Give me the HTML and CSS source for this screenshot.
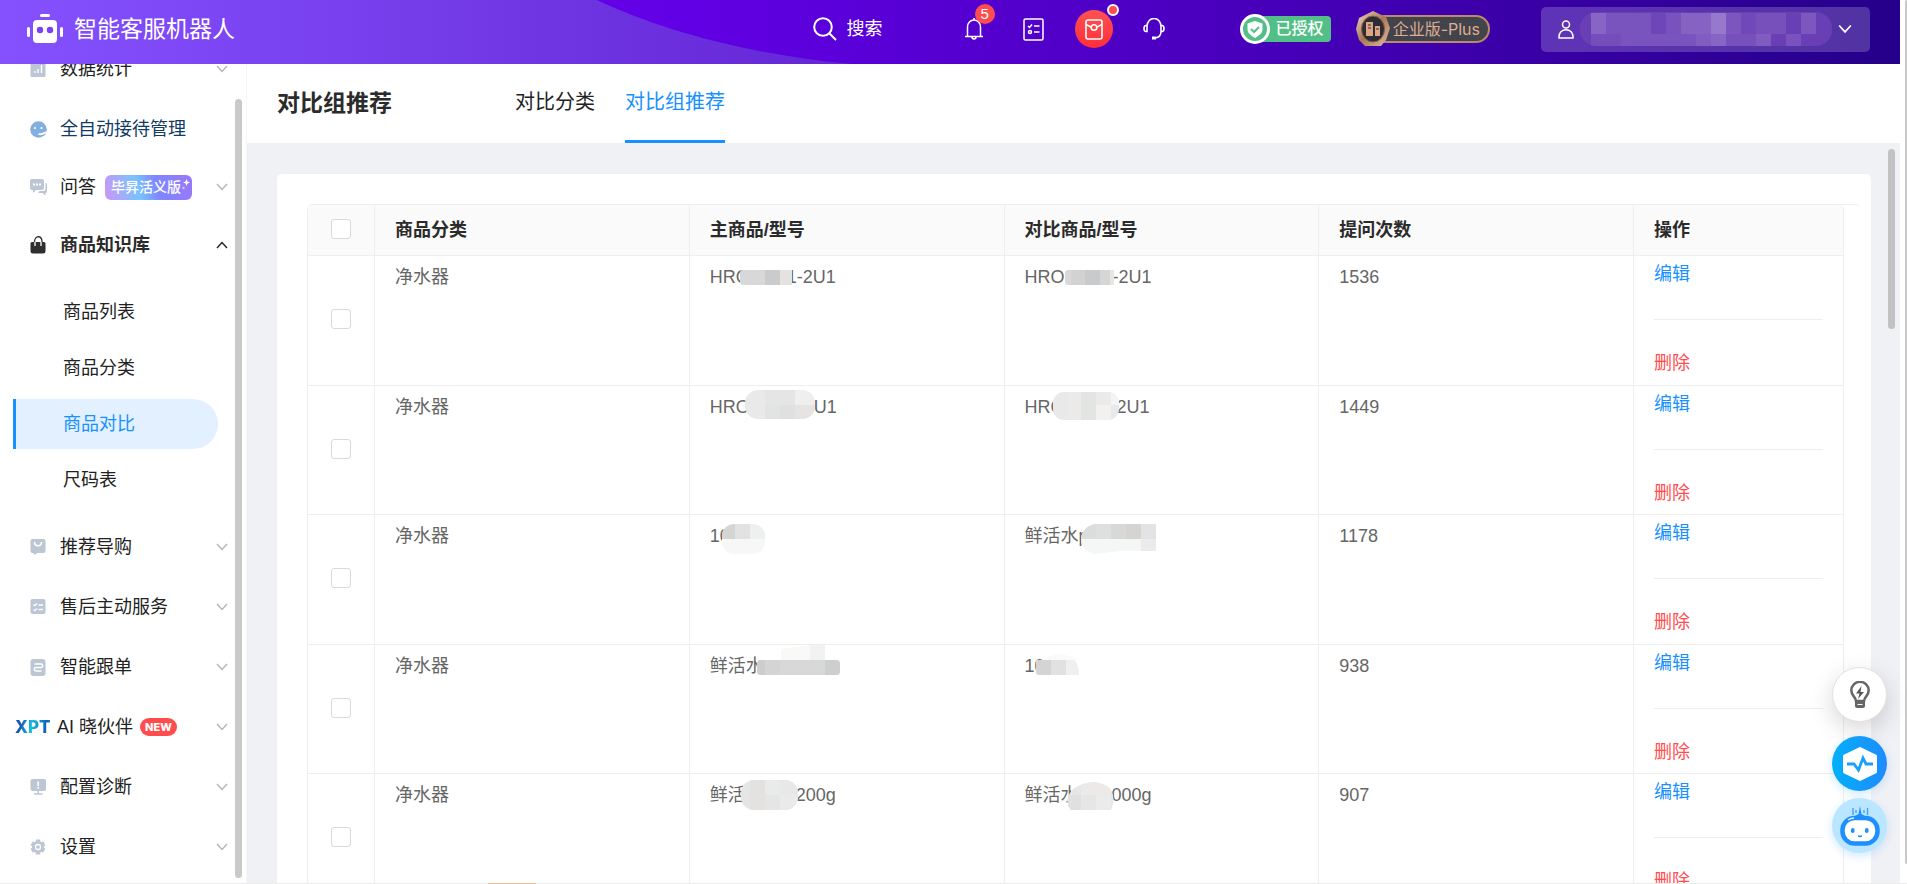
FILE: index.html
```html
<!DOCTYPE html>
<html lang="zh-CN">
<head>
<meta charset="utf-8">
<title>智能客服机器人</title>
<link rel="stylesheet" href="styles.css">
</head>
<body>
<svg class="defs" width="0" height="0" aria-hidden="true">
  <defs>
    <linearGradient id="sweep" x1="0" x2="1" y1="0" y2="0"><stop offset="0" stop-color="#8551ff"/><stop offset="1" stop-color="#6426d4"/></linearGradient>
    <linearGradient id="bronze" x1="0" x2="1" y1="0" y2="1"><stop offset="0" stop-color="#f3d9c4"/><stop offset=".5" stop-color="#a97757"/><stop offset="1" stop-color="#e0bda2"/></linearGradient>
    <symbol id="chev" viewBox="0 0 12 8"><path d="M1 1l5 5.500 5-5.500" fill="none" stroke="currentColor" stroke-width="1.400"/></symbol>
  </defs>
</svg>
<div class="app">
  <header class="topbar">
    <svg class="sweep" width="860" height="64" viewBox="0 0 860 64" aria-hidden="true"><path d="M0 0H597C660 30 750 55 852 64H0z" fill="url(#sweep)"/></svg>
    <a class="brand" href="#">
      <svg width="36" height="30" viewBox="0 0 36 30" aria-hidden="true"><g fill="#fff"><rect x="13" y="0" width="10" height="3" rx="1.500"/><rect x="6" y="6" width="24" height="23" rx="4"/><rect x="0" y="13" width="3" height="10" rx="1.500"/><rect x="33" y="13" width="3" height="10" rx="1.500"/></g><g fill="#7a42f5"><circle cx="13" cy="16" r="3.200"/><circle cx="23" cy="16" r="3.200"/></g></svg>
      <span>智能客服机器人</span>
    </a>
    <div class="tools">
      <button class="tool search" type="button">
        <svg width="24" height="24" viewBox="0 0 24 24" fill="none" stroke="#fff" stroke-width="2"><circle cx="10" cy="10" r="8.800"/><path d="M16.500 16.500L23 23"/></svg>
        <span>搜索</span>
      </button>
      <button class="tool bell" type="button" aria-label="通知">
        <svg width="20" height="22" viewBox="0 0 20 22" fill="none" stroke="#fff" stroke-width="1.500"><path d="M1 18.500h18M3.500 18.500V9a6.500 7 0 0 1 13 0v9.500M10 2V0M8 19c0 2.500 4 2.500 4 0"/></svg>
        <span class="count">5</span>
      </button>
      <button class="tool" type="button" aria-label="任务">
        <svg width="21" height="23" viewBox="0 0 21 23" fill="none" stroke="#fff" stroke-width="1.500"><rect x="1" y="1" width="19" height="21" rx="1.500"/><path d="M5 8l1.500 1.500L9 6.500M11 8h5.500M11 14h5.500"/><circle cx="7" cy="14" r="1.500"/></svg>
      </button>
      <button class="tool gift" type="button" aria-label="红包">
        <svg width="18" height="21" viewBox="0 0 18 21" fill="none" stroke="#fff" stroke-width="1.600"><rect x="1" y="1" width="16" height="19" rx="2"/><path d="M1 5.500l5 2.500M17 5.500l-5 2.500"/><circle cx="9" cy="8.500" r="2.800"/></svg>
        <span class="dot"></span>
      </button>
      <button class="tool" type="button" aria-label="客服">
        <svg width="22" height="22" viewBox="0 0 22 22" fill="none" stroke="#fff" stroke-width="1.600"><path d="M4 8a7 7.500 0 0 1 14 0M4 7.500v6H3c-1.500 0-2-1-2-3s.500-3 2-3zM18 7.500v6h1c1.500 0 2-1 2-3s-.500-3-2-3zM18 13.500c0 4-2 6-6 6.500"/><path d="M9 20h4" stroke-width="3"/></svg>
      </button>
      <span class="auth">
        <svg width="30" height="30" viewBox="0 0 30 30" aria-hidden="true"><circle cx="15" cy="15" r="13.500" fill="#52bf86" stroke="#fff" stroke-width="3"/><path d="M15 7l7.500 2.500V15c0 4-3 6.500-7.500 9-4.500-2.500-7.500-5-7.500-9V9.500z" fill="#fff"/><path d="M11 15l3 3 5-5" fill="none" stroke="#52bf86" stroke-width="2"/></svg>
        <span>已授权</span>
      </span>
      <span class="edition">
        <svg width="36" height="36" viewBox="0 0 36 36" aria-hidden="true"><path d="M18 0l13 6 4 11-4 12-5 6H10l-6-6-3-11L4 7z" fill="url(#bronze)"/><ellipse cx="18" cy="18" rx="11.500" ry="13" fill="#2c2c34" stroke="#8a6048"/><path d="M11 11h7v14h-7zM20 15h5v10h-5z" fill="#dba584"/><path d="M13 14h3M13 17h3M21 18h3" stroke="#2c2c34"/></svg>
        <span>企业版-Plus</span>
      </span>
      <button class="account" type="button" aria-label="账户">
        <svg width="16" height="19" viewBox="0 0 16 19" fill="none" stroke="#fff" stroke-width="1.500"><circle cx="8" cy="4.500" r="3.500"/><path d="M1 18c-1-11 15-11 14 0z"/></svg>
        <svg width="252" height="38" viewBox="0 0 252 38" aria-hidden="true"><defs><clipPath id="acct"><rect width="252" height="34" y="2" rx="16"/></clipPath></defs><g clip-path="url(#acct)"><rect width="252" height="38" fill="#6a3fb6"/><g fill="#fff"><rect x="11" y="3" width="15" height="21" opacity=".2"/><rect x="26" y="3" width="45" height="21" opacity=".11"/><rect x="71" y="3" width="15" height="21" opacity=".04"/><rect x="86" y="3" width="15" height="21" opacity=".1"/><rect x="101" y="3" width="30" height="21" opacity=".19"/><rect x="131" y="3" width="15" height="21" opacity=".3"/><rect x="146" y="3" width="15" height="21" opacity=".12"/><rect x="161" y="3" width="15" height="21" opacity=".05"/><rect x="176" y="3" width="30" height="21" opacity=".09"/><rect x="221" y="3" width="15" height="21" opacity=".13"/><rect x="11" y="24" width="30" height="18" opacity=".08"/><rect x="41" y="24" width="75" height="18" opacity=".11"/><rect x="116" y="24" width="15" height="18" opacity=".16"/><rect x="131" y="24" width="15" height="18" opacity=".2"/><rect x="146" y="24" width="30" height="18" opacity=".09"/><rect x="176" y="24" width="15" height="18" opacity=".15"/><rect x="206" y="24" width="15" height="18" opacity=".1"/></g></g></svg>
        <svg class="chevron" width="14" height="10"><use href="#chev"/></svg>
      </button>
    </div>
  </header>

  <nav class="sidebar">
    <ul class="menu">
      <li><a class="item" href="#"><svg width="16" height="16" viewBox="0 0 16 16"><rect width="15" height="16" rx="1.500" fill="#bcc6d4"/><path d="M4.500 12v-2M7.500 12V8M11 12V4" stroke="#fff" stroke-width="1.400"/></svg><span>数据统计</span><svg class="arrow" width="12" height="8"><use href="#chev"/></svg></a></li>
      <li><a class="item navy" href="#"><svg width="17" height="17" viewBox="0 0 17 17"><circle cx="8.500" cy="8.500" r="8.300" fill="#82afe0"/><circle cx="5" cy="7" r="1.100" fill="#fff"/><circle cx="11.500" cy="7" r="1.100" fill="#fff"/><path d="M8.500 13c3 1 5-.500 7.500-2" stroke="#fff" stroke-width="1.800" fill="none"/></svg><span>全自动接待管理</span></a></li>
      <li><a class="item short" href="#"><svg width="17" height="17" viewBox="0 0 17 17"><path d="M2 0h10a2 2 0 0 1 2 2v7a2 2 0 0 1-2 2H6l-3 3v-3H2a2 2 0 0 1-2-2V2a2 2 0 0 1 2-2z" fill="#bcc6d4"/><path d="M15.500 4c1 0 1.500.500 1.500 1.500V12c0 1-.500 2-1.500 2v2.500L12.500 14H8l1.500-2h4c1 0 2-1 2-2z" fill="#bcc6d4"/><path d="M3 5.500h8" stroke="#fff" stroke-width="2" stroke-dasharray="2 1"/></svg><span>问答</span><span class="promo">毕昇活义版<svg width="8" height="12" viewBox="0 0 8 12"><path d="M4.500 0l1 2.500L8 3.500l-2.500 1-1 2.500-1-2.500L1 3.500l2.500-1z" fill="#fff"/><circle cx="1.500" cy="9" r="1.200" fill="#d9ccff"/></svg></span><svg class="arrow" width="12" height="8"><use href="#chev"/></svg></a></li>
      <li>
        <a class="item open" href="#"><svg width="16" height="18" viewBox="0 0 16 18"><path d="M1.500 6h12a1.500 1.500 0 0 1 1.500 1.500V15a2.500 2.500 0 0 1-2.500 2.500h-10A2.500 2.500 0 0 1 0 15V7.500A1.500 1.500 0 0 1 1.500 6z" fill="#2f2f2f"/><path d="M4 6c0-7 7.500-7 7.500 0" stroke="#2f2f2f" stroke-width="1.300" fill="none"/><path d="M4.500 6v4M10.500 6v4" stroke="#fff" stroke-width="1.300"/></svg><span>商品知识库</span><svg class="arrow" width="12" height="8"><use href="#chev"/></svg></a>
        <ul class="submenu">
          <li><a class="sub" href="#">商品列表</a></li>
          <li><a class="sub" href="#">商品分类</a></li>
          <li><a class="sub current" href="#">商品对比</a></li>
          <li><a class="sub" href="#">尺码表</a></li>
        </ul>
      </li>
      <li><a class="item" href="#"><svg width="16" height="16" viewBox="0 0 16 16"><path d="M2 0h11a2 2 0 0 1 2 2v10a2 2 0 0 1-2 2H7l-3 2-1-2H2a2 2 0 0 1-2-2V2a2 2 0 0 1 2-2z" fill="#bcc6d4"/><path d="M4 3c0 5 7 5 7 0" fill="none" stroke="#fff" stroke-width="1.500"/></svg><span>推荐导购</span><svg class="arrow" width="12" height="8"><use href="#chev"/></svg></a></li>
      <li><a class="item" href="#"><svg width="16" height="16" viewBox="0 0 16 16"><rect width="15" height="15" rx="2" fill="#bcc6d4"/><path d="M3 5.500l1.300 1.200L6.500 4.500M3 10.500l1.300 1.200 2.200-2.200M8 6h4.500M8 10.500h4.500" stroke="#fff" stroke-width="1.300" fill="none"/></svg><span>售后主动服务</span><svg class="arrow" width="12" height="8"><use href="#chev"/></svg></a></li>
      <li><a class="item" href="#"><svg width="16" height="17" viewBox="0 0 16 17"><rect width="15" height="17" rx="3" fill="#bcc6d4"/><path d="M4 5h6.500a1.500 1.500 0 0 1 0 3.500H5.500a1.500 1.500 0 0 0 0 3.500H11" stroke="#fff" stroke-width="1.400" fill="none"/></svg><span>智能跟单</span><svg class="arrow" width="12" height="8"><use href="#chev"/></svg></a></li>
      <li><a class="item ai" href="#"><span class="xpt">XPT</span><span>AI 晓伙伴</span><span class="new">NEW</span><svg class="arrow" width="12" height="8"><use href="#chev"/></svg></a></li>
      <li><a class="item" href="#"><svg width="16" height="16" viewBox="0 0 16 16"><rect width="15.500" height="12" rx="2" fill="#bcc6d4"/><path d="M3.500 15h8.500M7.700 12v3" stroke="#bcc6d4" stroke-width="1.500"/><path d="M7.700 2.500v4.500M7.700 8v1.700" stroke="#fff" stroke-width="1.600"/></svg><span>配置诊断</span><svg class="arrow" width="12" height="8"><use href="#chev"/></svg></a></li>
      <li><a class="item" href="#"><svg width="16" height="16" viewBox="0 0 16 16"><circle cx="7.500" cy="8" r="6" fill="#bcc6d4"/><path d="M7.500 .500v15M1.200 4.300l12.600 7.400M1.200 11.700l12.600-7.400" stroke="#bcc6d4" stroke-width="4.500"/><circle cx="7.500" cy="8" r="2.500" fill="#bcc6d4" stroke="#fff" stroke-width="1.300"/></svg><span>设置</span><svg class="arrow" width="12" height="8"><use href="#chev"/></svg></a></li>
    </ul>
    <span class="thumb"></span>
  </nav>

  <main class="page">
    <div class="pagehead">
      <h1>对比组推荐</h1>
      <div class="tabs">
        <a class="tab" href="#">对比分类</a>
        <a class="tab active" href="#">对比组推荐</a>
      </div>
    </div>
    <div class="content">
      <section class="card">
        <div class="tablewrap">
          <table>
            <colgroup><col class="c-check"><col><col><col><col><col class="c-ops"></colgroup>
            <thead><tr><th class="pick"><input type="checkbox" aria-label="全选"></th><th>商品分类</th><th>主商品/型号</th><th>对比商品/型号</th><th>提问次数</th><th>操作</th></tr></thead>
            <tbody>
              <tr><td class="pick"><input type="checkbox" aria-label="选择第1行"></td><td>净水器</td>
                <td><div class="model"><span>HRO</span><svg class="mosaic" width="49" height="30"><rect x="-2" y="8" width="27" height="15" rx="3" fill="#d8d8d8"/><rect x="7" y="8" width="18" height="15" fill="#d8d8d8"/><rect x="23" y="8" width="15" height="15" fill="#cacbcd"/><rect x="38" y="8" width="12" height="15" fill="#e4e3df"/></svg><span>1-2U1</span></div></td>
                <td><div class="model"><span>HRO</span><svg class="mosaic" width="60" height="30"><rect x="8" y="8" width="20" height="15" rx="3" fill="#d9d9d9"/><rect x="14" y="8" width="14" height="15" fill="#d2d2d3"/><rect x="28" y="8" width="15" height="15" fill="#c9cacc"/><rect x="43" y="8" width="10" height="15" fill="#d6d6d6"/><rect x="53" y="8" width="4" height="15" fill="#e6e6e4"/></svg><span>-2U1</span></div></td>
                <td>1536</td><td class="ops"><a href="#">编辑</a><hr><a class="danger" href="#">删除</a></td></tr>
              <tr><td class="pick"><input type="checkbox" aria-label="选择第2行"></td><td>净水器</td>
                <td><div class="model"><span>HRO</span><svg class="mosaic" width="76" height="30"><clipPath id="m21"><rect x="3" y="-2" width="70" height="29" rx="13"/></clipPath><g clip-path="url(#m21)"><rect x="3" y="-2" width="72" height="30" fill="#e9e9e9"/><rect x="23" y="-2" width="30" height="15" fill="#e4e5e4"/><rect x="53" y="-2" width="22" height="15" fill="#efefef"/><rect x="23" y="13" width="15" height="15" fill="#e2e4e3"/><rect x="38" y="13" width="15" height="15" fill="#e0e0e0"/><rect x="53" y="13" width="22" height="15" fill="#e5e4e2"/></g></svg><span>U1</span></div></td>
                <td><div class="model"><span>HRO</span><svg class="mosaic" width="64" height="30"><clipPath id="m22"><rect x="-4" y="0" width="66" height="28" rx="11"/></clipPath><g clip-path="url(#m22)"><rect x="-4" width="68" height="28" fill="#e9e9e9"/><rect x="9" width="15" height="28" fill="#ebeae8"/><rect x="24" width="15" height="28" fill="#e3e4e4"/><rect x="39" width="15" height="13" fill="#ebeae8"/><rect x="39" y="13" width="15" height="15" fill="#f2f1ef"/><rect x="54" width="15" height="13" fill="#f2f5f8"/></g></svg><span>2U1</span></div></td>
                <td>1449</td><td class="ops"><a href="#">编辑</a><hr><a class="danger" href="#">删除</a></td></tr>
              <tr><td class="pick"><input type="checkbox" aria-label="选择第3行"></td><td>净水器</td>
                <td><div class="model"><span>10</span><svg class="mosaic" width="43" height="30"><clipPath id="m31"><rect x="0" y="3" width="43" height="30" rx="12"/></clipPath><g clip-path="url(#m31)"><rect y="3" width="43" height="30" fill="#f7f7f7"/><rect y="3" width="13" height="15" fill="#d5d5d3"/><rect x="13" y="3" width="15" height="15" fill="#e2e2e2"/><rect x="28" y="3" width="15" height="15" fill="#edf0ef"/></g></svg></div></td>
                <td><div class="model"><span>鲜活水p</span><svg class="mosaic" width="75" height="30"><clipPath id="m32"><path d="M14 3H75V30H40L14 33Q0 30 0 18 2 5 14 3z"/></clipPath><g clip-path="url(#m32)"><rect y="3" width="75" height="30" fill="#f5f7f6"/><rect y="3" width="15" height="15" fill="#dcdcdc"/><rect x="15" y="3" width="15" height="15" fill="#dee0df"/><rect x="30" y="3" width="15" height="15" fill="#d8d8d7"/><rect x="45" y="3" width="15" height="15" fill="#d5d4d2"/><rect x="60" y="3" width="15" height="15" fill="#e2e3e5"/><rect x="60" y="18" width="15" height="15" fill="#ebebeb"/></g></svg></div></td>
                <td>1178</td><td class="ops"><a href="#">编辑</a><hr><a class="danger" href="#">删除</a></td></tr>
              <tr><td class="pick"><input type="checkbox" aria-label="选择第4行"></td><td>净水器</td>
                <td><div class="model"><span>鲜活水</span><svg class="mosaic" width="84" height="30"><path d="M25 -2L55 -6V9H25z" fill="#f9f9f8"/><rect x="54" y="-6" width="15" height="15" fill="#f1f3f2"/><clipPath id="m41"><rect x="1" y="9" width="83" height="15" rx="4"/></clipPath><g clip-path="url(#m41)"><rect y="9" width="84" height="15" fill="#d8d8d9"/><rect y="9" width="9" height="15" fill="#cecccd"/><rect x="9" y="9" width="15" height="15" fill="#d3d4d3"/><rect x="69" y="9" width="15" height="15" fill="#cdcecf"/></g></svg></div></td>
                <td><div class="model"><span>10</span><svg class="mosaic" width="44" height="30"><path d="M5 9Q22 -2 42 9z" fill="#fafafa"/><clipPath id="m42"><path d="M-1 9H37Q42 12 42 24H2Q-1 24 -1 21z"/></clipPath><g clip-path="url(#m42)"><rect x="-1" y="9" width="15" height="15" fill="#d4d4d4"/><rect x="14" y="9" width="15" height="15" fill="#e1e1e1"/><rect x="29" y="9" width="14" height="15" fill="#efefef"/></g></svg></div></td>
                <td>938</td><td class="ops"><a href="#">编辑</a><hr><a class="danger" href="#">删除</a></td></tr>
              <tr><td class="pick"><input type="checkbox" aria-label="选择第5行"></td><td>净水器</td>
                <td><div class="model"><span>鲜活</span><svg class="mosaic" width="62" height="30"><clipPath id="m51"><rect x="3" y="0" width="57" height="30" rx="13"/></clipPath><g clip-path="url(#m51)"><rect width="62" height="30" fill="#e5e5e5"/><rect x="12" width="15" height="30" fill="#e3e2e0"/><rect x="27" width="15" height="15" fill="#e9ebea"/><rect x="42" width="20" height="15" fill="#e8e8e8"/><rect x="42" y="15" width="20" height="15" fill="#e9eaec"/></g></svg><span>200g</span></div></td>
                <td><div class="model"><span>鲜活水</span><svg class="mosaic" width="45" height="30"><clipPath id="m52"><path d="M0 30Q-8 20 2 9 20-3 36 6 44 12 42 24L40 30z"/></clipPath><g clip-path="url(#m52)"><rect x="-4" width="50" height="30" fill="#e6e6e6"/><rect x="10" width="30" height="15" fill="#ebeae8"/><rect x="25" y="15" width="15" height="15" fill="#e9eceb"/><rect x="-4" y="15" width="14" height="15" fill="#e0e0e0"/></g></svg><span>000g</span></div></td>
                <td>907</td><td class="ops"><a href="#">编辑</a><hr><a class="danger" href="#">删除</a></td></tr>
            </tbody>
          </table>
        </div>
      </section>
      <span class="thumb"></span>
    </div>
    <div class="floaters">
      <button class="float bulb" type="button" aria-label="建议"><svg width="20" height="27" viewBox="0 0 20 27"><path d="M6 20c0-4-4.700-5-4.700-10.500a8.700 8.700 0 0 1 17.400 0C18.700 15 14 16 14 20z" fill="none" stroke="#666" stroke-width="2.500"/><path d="M5 20h10v5q0 2-2 2H7q-2 0-2-2z" fill="#666"/><path d="M7.500 23.500h5" stroke="#fff"/><path d="M11.500 5L6 12.500h3.500L8 18l6-7h-3.500z" fill="#555"/></svg></button>
      <button class="float pulse" type="button" aria-label="诊断"><svg width="34" height="34" viewBox="0 0 34 34"><path d="M17 1.500L32.500 9v16L17 32.500 1.500 25V9z" fill="#fff" stroke="#fff" stroke-width="3" stroke-linejoin="round"/><path d="M4 17h7l4.500 6 4.500-12 3 6h7" fill="none" stroke="#18a0fb" stroke-width="2.800"/></svg></button>
      <button class="float bot" type="button" aria-label="助手"><svg width="40" height="40" viewBox="0 0 40 40"><path d="M20 0l1.500 8L25 10H15l3.500-2z" fill="#1e8fff"/><path d="M13 2v7M16 4v3M24 4v3M27.500 2v7" stroke="#3d9cff" stroke-width="1.300"/><rect x="2.500" y="12" width="35" height="25.500" rx="12" fill="#fff" stroke="#1e8fff" stroke-width="4.500"/><path d="M8 14q3-2 6-2" stroke="#d9efff" stroke-width="1.500" fill="none"/><rect x="11" y="22" width="3.500" height="5" rx="1.700" fill="#1e8fff"/><rect x="25" y="22" width="3.500" height="5" rx="1.700" fill="#1e8fff"/><path d="M18 30q2 2 4 0z" fill="#1e8fff" stroke="#1e8fff"/></svg></button>
    </div>
  </main>
  <div class="edge"></div>
  <div class="baseline"><span></span></div>
</div>
</body>
</html>
```
FILE: styles.css
```css
* { box-sizing: border-box; }
body {
  margin: 0;
  background: #fff;
  color: #222;
  font: 400 18px/28px "Liberation Sans", "Noto Sans CJK SC", sans-serif;
}
a { color: inherit; text-decoration: none; }
ul { list-style: none; margin: 0; padding: 0; }
button { font: inherit; color: inherit; background: none; border: 0; padding: 0; }
svg { display: block; flex: none; }
.defs { position: absolute; }

.app {
  position: relative;
  height: 100vh;
  overflow: hidden;
  display: grid;
  grid-template: 64px minmax(0, 1fr) / 247px minmax(0, 1fr) 7px;
}

/* top bar */
.topbar {
  position: relative;
  z-index: 2;
  grid-column: 1 / 3;
  display: flex;
  align-items: center;
  justify-content: space-between;
  padding: 0 30px 6px 27px;
  color: #fff;
  background: linear-gradient(90deg, #6c00f0 0%, #6200e6 35%, #4600b8 68%, #25008a 100%);
}
.sweep { position: absolute; left: 0; top: 0; }
.brand { position: relative; display: flex; align-items: center; gap: 11px; font-size: 23px; }
.tools { position: relative; display: flex; align-items: center; }
.tool { position: relative; margin-right: 39px; }
.search { display: flex; align-items: center; gap: 10px; margin-right: 81px; }
.count {
  position: absolute; left: 11px; top: -14px;
  width: 20px; height: 20px; border-radius: 10px;
  background: #ff4d4f; font-size: 15px; line-height: 20px; text-align: center;
}
.gift {
  width: 38px; height: 38px; border-radius: 50%;
  display: grid; place-items: center;
  margin-left: -8px; margin-right: 30px;
  background: linear-gradient(#ff5252, #ff2f38);
}
.dot {
  position: absolute; right: -6px; top: -6px;
  width: 12px; height: 12px; border-radius: 50%;
  background: #ff4d4f; border: 2px solid #fff;
}
.auth { display: flex; align-items: center; margin: 0 24px 0 36px; font-size: 16px; font-weight: 500; }
.auth svg { position: relative; z-index: 1; margin-right: -15px; }
.auth span { padding: 0 7px 0 21px; line-height: 26px; border-radius: 4px; background: #52bf86; }
.edition { display: flex; align-items: center; margin-right: 51px; font-size: 16px; color: #dcae92; }
.edition svg { position: relative; z-index: 1; margin-right: -20px; }
.edition span { padding: 0 8px 0 20px; line-height: 24px; border: 2px solid #b98a6c; border-radius: 14px; background: #43434b; font-family: Inter, "Noto Sans CJK SC", sans-serif; }
.account {
  display: flex; align-items: center; gap: 6px;
  height: 45px; padding: 0 18px 0 17px; border-radius: 5px;
  background: rgba(255, 255, 255, .2);
}

/* side navigation */
.sidebar { position: relative; overflow: hidden; background: #fff; border-right: 1px solid #f6f6f8; }
.menu { margin-top: -25px; }
.item { display: flex; align-items: center; height: 60px; padding: 0 18px 0 30px; }
.item > svg:first-child { width: 17px; margin-right: 13px; }
.item .arrow { margin-left: auto; color: #b5b5b5; }
.item.short { height: 56px; }
.navy { color: #123a66; }
.item.open { font-weight: 700; color: #2b2b2b; }
.item.open .arrow { color: #222; transform: rotate(180deg); }
.promo {
  display: flex; align-items: center; gap: 1px;
  margin-left: 9px; height: 25px; padding: 0 2px 0 6px; border-radius: 6px;
  color: #fff; font-size: 14px; font-weight: 500;
  background: linear-gradient(75deg, #c29af8 5%, #78c4ff 38%, #7f86ff 60%, #9a78fa 100%);
}
.promo svg { align-self: flex-start; margin-top: 4px; }
.item.ai { padding-left: 15px; }
.xpt {
  width: 42px; font: 800 17px/28px Inter, sans-serif;
  background: linear-gradient(100deg, #1557b5 15%, #15bfe0 40%, #0f62b8 70%, #17c3e0);
  -webkit-background-clip: text; background-clip: text; color: transparent;
}
.new {
  margin-left: 7px; padding: 0 5px; border-radius: 9px;
  background: #ff4d4f; color: #fff; font: 800 11px/18px Inter, sans-serif;
}
.submenu { display: grid; gap: 6px; padding: 12px 28px 12px 13px; }
.sub { display: block; padding-left: 47px; border-left: 3px solid transparent; line-height: 50px; }
.sub.current { color: #1890ff; background: #e2f0ff; border-color: #1890ff; border-radius: 0 25px 25px 0; }
.thumb { position: absolute; border-radius: 4px; background: #c9c9c9; width: 7px; }
.sidebar .thumb { right: 4px; top: 35px; bottom: 6px; }

/* page */
.page { position: relative; display: flex; flex-direction: column; min-height: 0; }
.pagehead { display: flex; height: 79px; padding-left: 30px; }
h1 { margin: 0; width: 238px; font-size: 23px; line-height: 79px; color: #2b2b2b; }
.tabs { display: flex; gap: 30px; }
.tab { font-size: 20px; line-height: 76px; border-bottom: 3px solid transparent; }
.tab.active { color: #1890ff; border-color: #1890ff; }
.content { position: relative; flex: 1; min-height: 0; overflow: hidden; padding: 31px 29px 0 30px; background: #f0f1f5; }
.content .thumb { right: 5px; top: 6px; height: 180px; background: #c2c2c2; }
.card { padding: 30px 11px 0 30px; border-radius: 5px; background: #fff; }
.tablewrap { padding-right: 16px; border-top: 1px solid #eee; border-radius: 5px; }
table { width: 100%; table-layout: fixed; border-collapse: separate; border-spacing: 0; border-left: 1px solid #eee; border-radius: 5px 5px 0 0; }
.c-check { width: 67px; }
.c-ops { width: 210px; }
th, td { border: solid #eee; border-width: 0 1px 1px 0; text-align: left; }
th { height: 51px; padding: 0 20px 1px; background: #fafafa; color: #2b2b2b; }
th:last-child { border-top-right-radius: 5px; }
td { height: 129px; padding: 7px 20px 0; vertical-align: top; color: #666; }
tbody tr:nth-child(odd) td { height: 130px; }
th.pick, td.pick { padding: 0 0 3px; text-align: center; vertical-align: middle; }
.pick input {
  appearance: none; display: block; width: 20px; height: 20px; margin: 0 auto;
  border: 1px solid #d9d9d9; border-radius: 3px; background: #fff;
}
.model { display: flex; height: 28px; align-items: center; }
.mosaic { position: relative; z-index: 1; overflow: visible; margin: 0 -4px 0 -8px; }
td.ops { padding-top: 4px; color: #1890ff; }
.ops a { display: block; }
.ops hr { height: 1px; margin: 31px 0 29px; border: 0; background: #eee; }
.ops .danger { color: #ff4d4f; }

/* floating helpers */
.floaters { position: absolute; right: 13px; bottom: 31px; display: grid; gap: 7px; }
.float { display: grid; place-items: center; width: 55px; height: 55px; border-radius: 50%; }
.bulb { margin-bottom: 7px; background: #fff; border: 1px solid #e2e2e2; box-shadow: 0 8px 24px rgba(0, 0, 0, .16); }
.pulse { background: linear-gradient(90deg, #03b0f8, #1e8bff); box-shadow: 0 3px 10px rgba(24, 144, 255, .2); }
.bot { background: #bae6ff; box-shadow: 0 3px 10px rgba(24, 144, 255, .2); }

.edge { grid-column: 3; grid-row: 1 / 3; justify-self: end; width: 2px; margin-bottom: 20px; background: #c8c8c8; border-radius: 2px 0 0 2px; }
.baseline { position: absolute; left: 0; right: 0; bottom: 0; height: 1px; padding-left: 488px; background: #ececec; }
.baseline span { display: block; width: 48px; height: 1px; background: #f5b784; }
```
